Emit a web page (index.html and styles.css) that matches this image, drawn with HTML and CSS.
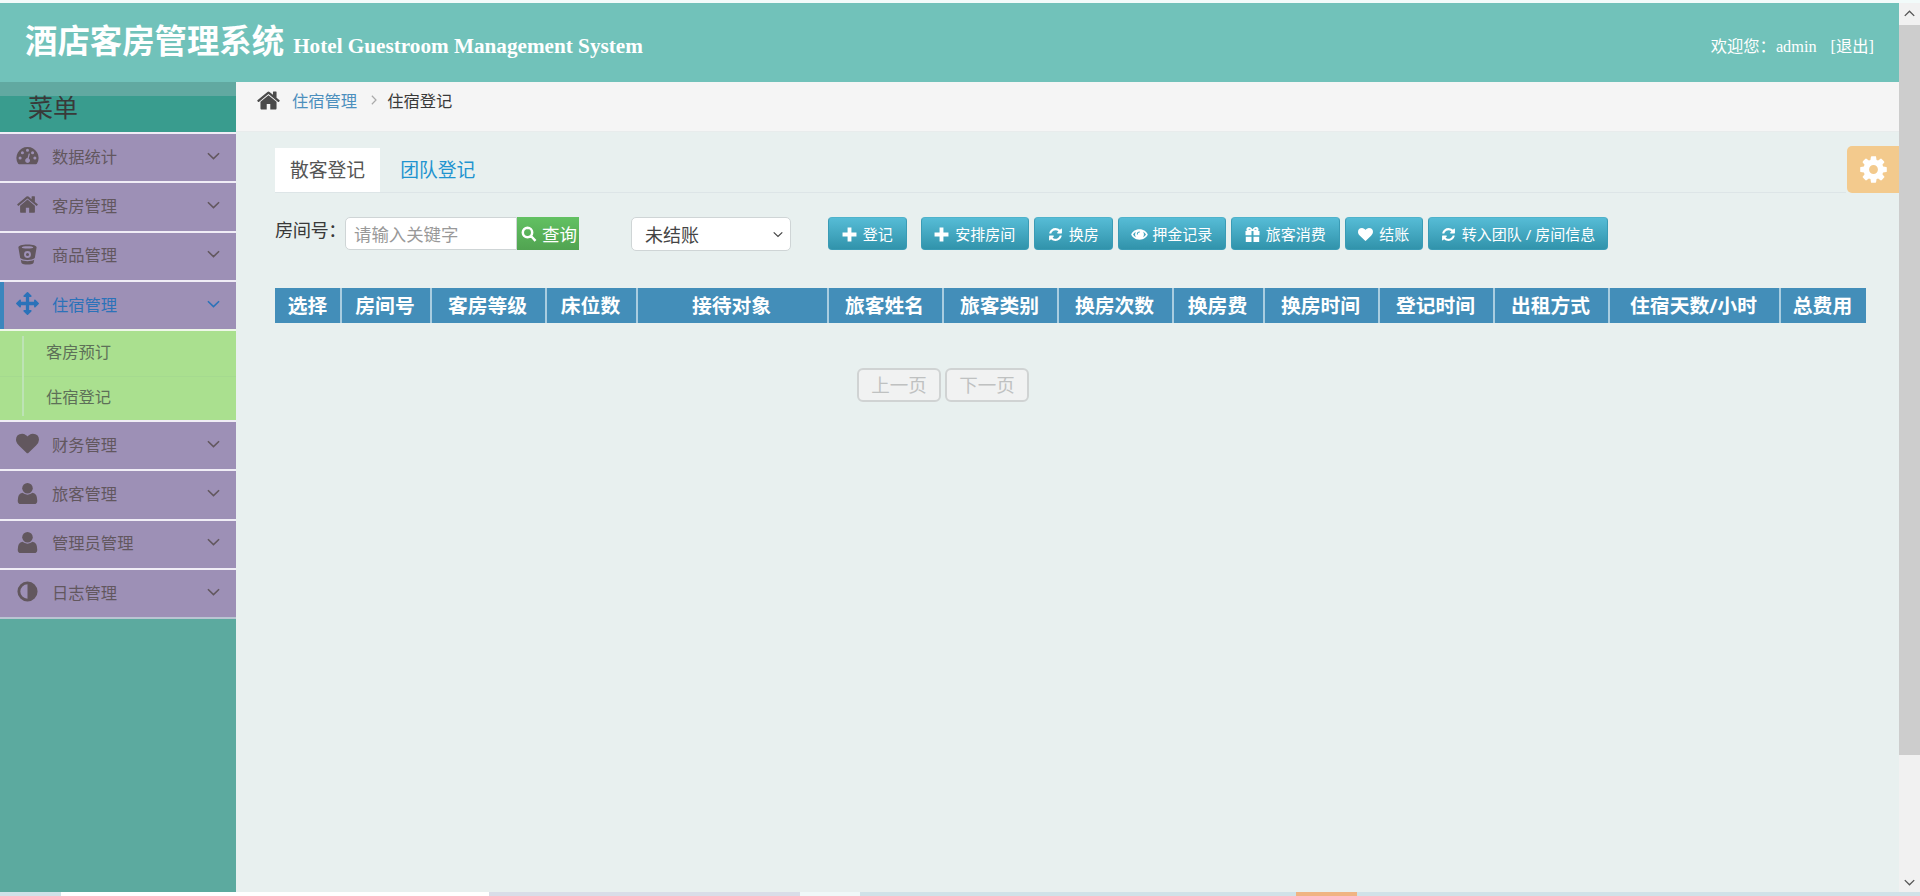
FILE: index.html
```
<!DOCTYPE html>
<html lang="zh-CN">
<head>
  <meta charset="UTF-8">
  <title>酒店客房管理系统</title>
  <link rel="stylesheet" href="styles.css">
</head>
<body>
<!-- icons -->
<svg class="sprite">
  <symbol id="home" viewBox="0 0 1792 1792"><path d="M1472 992v480q0 26-19 45t-45 19h-384v-384h-256v384h-384q-26 0-45-19t-19-45v-480q0-1 .5-3t.5-3l575-474 575 474q1 2 1 6zm223-69l-62 74q-8 9-21 11h-3q-13 0-21-7l-692-577-692 577q-12 8-24 7-13-2-21-11l-62-74q-8-10-7-23.500t11-21.500l719-599q32-26 76-26t76 26l244 204v-195q0-14 9-23t23-9h192q14 0 23 9t9 23v408l219 182q10 8 11 21.500t-7 23.500z"/></symbol>
  <symbol id="move" viewBox="0 0 1792 1792"><path d="M1792 896q0 26-19 45l-256 256q-19 19-45 19t-45-19-19-45v-128h-384v384h128q26 0 45 19t19 45-19 45l-256 256q-19 19-45 19t-45-19l-256-256q-19-19-19-45t19-45 45-19h128v-384h-384v128q0 26-19 45t-45 19-45-19l-256-256q-19-19-19-45t19-45l256-256q19-19 45-19t45 19 19 45v128h384v-384h-128q-26 0-45-19t-19-45 19-45l256-256q19-19 45-19t45 19l256 256q19 19 19 45t-19 45-45 19h-128v384h384v-128q0-26 19-45t45-19 45 19l256 256q19 19 19 45z"/></symbol>
  <symbol id="heart" viewBox="0 0 1792 1792"><path d="M896 1664q-26 0-44-18l-624-602q-10-8-27.500-26t-55.500-65.500-68-97.500-53.500-121-23.500-138q0-220 127-344t351-124q62 0 126.500 21.500t120 58 95.500 68.500 76 68q36-36 76-68t95.500-68.500 120-58 126.500-21.500q224 0 351 124t127 344q0 221-229 450l-623 600q-18 18-44 18z"/></symbol>
  <symbol id="refresh" viewBox="0 0 1792 1792"><path d="M1639 1056q0 5-1 7-64 268-268 434.500t-478 166.500q-146 0-282.500-55t-243.500-157l-129 129q-19 19-45 19t-45-19-19-45v-448q0-26 19-45t45-19h448q26 0 45 19t19 45-19 45l-137 137q71 66 161 102t187 36q134 0 250-65t186-179q11-17 53-117 8-23 30-23h192q13 0 22.500 9.500t9.500 22.500zm25-800v448q0 26-19 45t-45 19h-448q-26 0-45-19t-19-45 19-45l138-138q-148-137-349-137-134 0-250 65t-186 179q-11 17-53 117-8 23-30 23h-199q-13 0-22.500-9.500t-9.500-22.500v-7q65-268 270-434.500t480-166.500q146 0 284 55.500t245 156.500l130-129q19-19 45-19t45 19 19 45z"/></symbol>
  <symbol id="cog" viewBox="0 0 1792 1792"><path d="M1152 896q0-106-75-181t-181-75-181 75-75 181 75 181 181 75 181-75 75-181zm512-109v222q0 12-8 23t-20 13l-185 28q-19 54-39 91 35 50 107 138 10 12 10 25t-9 23q-27 37-99 108t-94 71q-12 0-26-9l-138-108q-44 23-91 38-16 136-29 186-7 28-36 28h-222q-14 0-24.500-8.500t-11.500-21.500l-28-184q-49-16-90-37l-141 107q-10 9-25 9-14 0-25-11-126-114-165-168-7-10-7-23 0-12 8-23 15-21 51-66.500t54-70.500q-27-50-41-99l-183-27q-13-2-21-12.500t-8-23.500v-222q0-12 8-23t19-13l186-28q14-46 39-92-40-57-107-138-10-12-10-24 0-10 9-23 26-36 98.500-107.500t94.500-71.500q13 0 26 10l138 107q44-23 91-38 16-136 29-186 7-28 36-28h222q14 0 24.500 8.500t11.500 21.500l28 184q49 16 90 37l142-107q9-9 24-9 13 0 25 10 129 119 165 170 7 8 7 22 0 12-8 23-15 21-51 66.500t-54 70.500q26 50 41 98l183 28q13 2 21 12.500t8 23.500z"/></symbol>
  <symbol id="dash" viewBox="0 0 24 24"><path fill-rule="evenodd" d="M12 3a11.500 11.500 0 0 0-9.800 17.500q.4.500 1 .5h17.600q.6 0 1-.5A11.500 11.500 0 0 0 12 3zM4.300 13a1.600 1.600 0 1 1 0 3.200 1.600 1.600 0 0 1 0-3.200zM6.700 7.500a1.600 1.600 0 1 1 0 3.200 1.600 1.600 0 0 1 0-3.200zM12 5a1.600 1.600 0 1 1 0 3.200A1.600 1.600 0 0 1 12 5zM17.300 7.500a1.600 1.600 0 1 1 0 3.200 1.600 1.600 0 0 1 0-3.200zM19.700 13a1.600 1.600 0 1 1 0 3.200 1.600 1.600 0 0 1 0-3.200zM13.300 9.800l1.200.3-1.200 4.900a2.500 2.500 0 1 1-1.300-.3z"/></symbol>
  <symbol id="bucket" viewBox="0 0 24 24"><path fill-rule="evenodd" d="M12 1.500c6 0 9.800 1.300 9.500 3.200l-1.900 11c-2.500 2.600-12.700 2.600-15.200 0l-1.900-11C2.200 2.800 6 1.500 12 1.500zm0 1.900c-3.500 0-6 .5-6 1.200s2.500 1.200 6 1.200 6-.5 6-1.200-2.500-1.200-6-1.200zm0 5a3.600 3.600 0 1 0 0 7.200 3.600 3.600 0 0 0 0-7.200zm0 2a1.600 1.600 0 1 1 0 3.200 1.600 1.600 0 0 1 0-3.200zM5 17.500c3.500 2 10.500 2 14 0l-.7 3.300c-1.500 2.300-11.100 2.300-12.600 0z"/></symbol>
  <symbol id="user" viewBox="0 0 24 24"><circle cx="12" cy="6.500" r="5.500"/><path d="M6.800 11.300Q1.800 12 1.800 19.500q0 3.500 3.300 3.500h13.800q3.300 0 3.300-3.500 0-7.500-5-8.200Q15 13.200 12 13.200t-5.200-1.900z"/></symbol>
  <symbol id="adjust" viewBox="0 0 24 24"><path fill-rule="evenodd" d="M12 1.500a10.500 10.500 0 1 0 0 21 10.500 10.500 0 0 0 0-21zm0 3v15a7.500 7.500 0 0 1 0-15z"/></symbol>
  <symbol id="plus" viewBox="0 0 14 14"><path d="M5.200.5h3.600v4.700h4.700v3.600H8.800v4.700H5.200V8.800H.5V5.200h4.700z"/></symbol>
  <symbol id="eye" viewBox="0 0 18 14"><path fill-rule="evenodd" d="M9 1.500C4.500 1.500 1.300 4.200.2 7c1.100 2.800 4.300 5.500 8.800 5.500s7.700-2.700 8.800-5.500C16.700 4.200 13.500 1.500 9 1.500zM2.200 7c.6-1.200 1.700-2.300 3-3-1.200 1.800-1.200 4.200 0 6-1.300-.7-2.400-1.800-3-3zm13.600 0c-.6 1.200-1.700 2.300-3 3 1.200-1.800 1.200-4.200 0-6 1.300.7 2.400 1.800 3 3zM9.300 3.800v1.100A1.800 1.800 0 0 0 7.300 7H6.200A3 3 0 0 1 9.300 3.800z"/></symbol>
  <symbol id="gift" viewBox="0 0 14 15"><path fill-rule="evenodd" d="M0 4h1.400C.2 2 1.500 0 3.500 0 5.300 0 6 1.200 7 2.600 8 1.200 8.700 0 10.500 0c2 0 3.300 2 2.100 4H14v4.300H8V4H6v4.300H0zm3-1.200h2.300C4.400 1.600 3 1.200 3 2.800zm8 0c0-1.600-1.400-1.200-2.300 0zM.3 9.700H6V15H.3zM8 9.700h5.700V15H8z"/></symbol>
  <symbol id="search" viewBox="0 0 16 16"><path fill="none" stroke="currentColor" stroke-width="2.500" d="M6.500 1.800a4.700 4.700 0 1 0 0 9.400 4.700 4.700 0 0 0 0-9.400zM10 10l4.500 4.800"/></symbol>
  <symbol id="down" viewBox="0 0 14 8"><path fill="none" stroke="currentColor" stroke-width="1.700" d="M1 1l6 5.800L13 1"/></symbol>
</svg>

<div class="page">
  <div class="view">
    <header class="header">
      <h1>酒店客房管理系统</h1>
      <span class="subtitle">Hotel Guestroom Management System</span>
      <div class="welcome"><span>欢迎您：</span><span class="name">admin</span><a href="#">[退出]</a></div>
    </header>
    <div class="body">
      <aside class="sidebar">
        <h2>菜单</h2>
        <ul class="menu">
          <li><a href="#"><svg><use href="#dash"/></svg>数据统计<svg class="arrow"><use href="#down"/></svg></a></li>
          <li><a href="#"><svg><use href="#home"/></svg>客房管理<svg class="arrow"><use href="#down"/></svg></a></li>
          <li><a href="#"><svg><use href="#bucket"/></svg>商品管理<svg class="arrow"><use href="#down"/></svg></a></li>
          <li>
            <a href="#" class="active"><svg><use href="#move"/></svg>住宿管理<svg class="arrow"><use href="#down"/></svg></a>
            <ul class="submenu">
              <li><a href="#">客房预订</a></li>
              <li><a href="#">住宿登记</a></li>
            </ul>
          </li>
          <li><a href="#"><svg><use href="#heart"/></svg>财务管理<svg class="arrow"><use href="#down"/></svg></a></li>
          <li><a href="#"><svg><use href="#user"/></svg>旅客管理<svg class="arrow"><use href="#down"/></svg></a></li>
          <li><a href="#"><svg><use href="#user"/></svg>管理员管理<svg class="arrow"><use href="#down"/></svg></a></li>
          <li><a href="#"><svg><use href="#adjust"/></svg>日志管理<svg class="arrow"><use href="#down"/></svg></a></li>
        </ul>
      </aside>
      <main class="main">
        <div class="breadcrumb">
          <svg class="home"><use href="#home"/></svg>
          <a href="#">住宿管理</a>
          <svg class="sep"><use href="#down"/></svg>
          <span>住宿登记</span>
        </div>
        <a href="#" class="settings"><svg><use href="#cog"/></svg></a>
        <div class="content">
          <div class="tabs">
            <a href="#" class="selected">散客登记</a>
            <a href="#">团队登记</a>
          </div>
          <div class="toolbar">
            <label for="room">房间号：</label>
            <input id="room" type="text" placeholder="请输入关键字">
            <button class="search"><svg><use href="#search"/></svg>查询</button>
            <div class="select">未结账<svg><use href="#down"/></svg></div>
            <div class="buttons">
              <button class="btn first"><svg><use href="#plus"/></svg>登记</button>
              <button class="btn wide"><svg><use href="#plus"/></svg>安排房间</button>
              <button class="btn"><svg><use href="#refresh"/></svg>换房</button>
              <button class="btn wide"><svg class="eye"><use href="#eye"/></svg>押金记录</button>
              <button class="btn wide"><svg><use href="#gift"/></svg>旅客消费</button>
              <button class="btn"><svg><use href="#heart"/></svg>结账</button>
              <button class="btn team"><svg><use href="#refresh"/></svg>转入团队 / 房间信息</button>
            </div>
          </div>
          <table class="list">
            <colgroup>
              <col class="w66"><col class="w90"><col class="w115"><col class="w91"><col class="w191">
              <col class="w115"><col class="w115"><col class="w115"><col class="w91"><col class="w115">
              <col class="w115"><col class="w115"><col class="w171"><col>
            </colgroup>
            <thead>
              <tr>
                <th>选择</th><th>房间号</th><th>客房等级</th><th>床位数</th><th>接待对象</th>
                <th>旅客姓名</th><th>旅客类别</th><th>换房次数</th><th>换房费</th><th>换房时间</th>
                <th>登记时间</th><th>出租方式</th><th>住宿天数/小时</th><th>总费用</th>
              </tr>
            </thead>
          </table>
          <div class="pager">
            <button disabled>上一页</button>
            <button disabled>下一页</button>
          </div>
        </div>
      </main>
    </div>
  </div>
  <div class="scrollbar">
    <svg class="up"><use href="#down"/></svg>
    <div class="thumb"></div>
    <svg><use href="#down"/></svg>
  </div>
</div>
<div class="taskbar"><i></i><i></i><i></i><i></i></div>
</body>
</html>
```
FILE: styles.css
```
* {
  box-sizing: border-box;
}
body {
  margin: 0;
  height: 896px;
  overflow: hidden;
  background: #e8f0ef;
  border-top: 3px solid #f2fbfa;
  font-family: "Open Sans", "Noto Sans CJK SC", sans-serif;
  font-size: 16.3px;
  color: #393939;
}
a {
  text-decoration: none;
  color: inherit;
}
ul {
  margin: 0;
  padding: 0;
  list-style: none;
}
svg {
  fill: currentColor;
  flex: none;
}
button {
  font-family: inherit;
}
.sprite {
  display: none;
}
.page {
  display: flex;
  height: 889px;
}
.view {
  flex: 1;
  display: flex;
  flex-direction: column;
}

/* header */
.header {
  display: flex;
  align-items: center;
  height: 79px;
  padding: 0 25px;
  background: #71c2ba;
  color: #fff;
  font-family: "Liberation Serif", "Noto Sans CJK SC", serif;
}
.header h1 {
  margin: 0 9px 1px 0;
  font-size: 32.4px;
  line-height: 40px;
}
.subtitle {
  padding-top: 7px;
  font-size: 21.2px;
  font-weight: bold;
}
.welcome {
  display: flex;
  align-items: baseline;
  margin-left: auto;
  padding-top: 5px;
}
.welcome .name {
  margin-right: 14px;
}

/* sidebar */
.body {
  flex: 1;
  display: flex;
}
.sidebar {
  width: 236px;
  background: #5caa9f;
  border-top: 14px solid #61a9a1;
}
.sidebar h2 {
  margin: 0;
  height: 36px;
  padding-left: 28px;
  background: #399c8e;
  font-size: 25px;
  font-weight: normal;
  line-height: 23px;
}
.menu {
  border-bottom: 2px solid #b9c5d2;
}
.menu > li > a {
  display: flex;
  align-items: center;
  height: 49.3px;
  padding: 0 16px 4px;
  border-top: 2px solid #f0edf6;
  background: #9d90b6;
  color: #62575e;
}
.menu > li > a svg {
  width: 23px;
  height: 23px;
  margin-right: 13px;
}
.menu > li > a .arrow {
  width: 13px;
  height: 8px;
  margin: 0 0 0 auto;
}
.menu > li > a.active {
  color: #2b72b9;
  box-shadow: inset 4px 0 #3b86bd;
}
.submenu {
  position: relative;
  height: 91px;
  border-top: 2px solid #eef8e8;
  background: #aae08f;
  color: #5d7058;
}
.submenu:before {
  content: "";
  position: absolute;
  left: 22px;
  top: 5px;
  width: 2px;
  height: 80px;
  background: #bde3b5;
}
.submenu li {
  height: 45px;
  padding-left: 46px;
  line-height: 42px;
}
.submenu li + li {
  border-top: 1px solid #a5da8f;
  line-height: 40px;
}

/* main */
.main {
  position: relative;
  flex: 1;
}
.breadcrumb {
  display: flex;
  align-items: center;
  height: 50px;
  padding: 0 20px 13px;
  background: #f5f5f5;
  border-bottom: 1px solid #e8ecec;
}
.breadcrumb a {
  color: #4c8fbd;
}
.breadcrumb .home {
  width: 25px;
  height: 25px;
  margin-right: 11px;
  color: #4a4a4a;
}
.breadcrumb .sep {
  width: 10px;
  height: 6px;
  margin: 0 8px 0 12px;
  color: #aaa;
  transform: rotate(-90deg);
}
.settings {
  position: absolute;
  right: 0;
  top: 64px;
  display: flex;
  align-items: center;
  justify-content: center;
  width: 52px;
  height: 47px;
  background: #f3ca8d;
  border-radius: 5px 0 0 5px;
  color: #fff;
}
.settings svg {
  width: 31px;
  height: 31px;
}
.content {
  padding: 16px 33px 0 39px;
}
.tabs {
  display: flex;
  height: 45px;
  margin-right: 20px;
  border-bottom: 1px solid #dde5e7;
  font-size: 18.800px;
  line-height: 44px;
}
.tabs a {
  padding: 0 15px;
  color: #1f94cf;
}
.tabs a + a {
  margin-left: 5px;
}
.tabs .selected {
  background: #fff;
  color: #555;
}
.toolbar {
  display: flex;
  height: 34px;
  margin-top: 24px;
}
.toolbar label {
  width: 70px;
  font-size: 18.300px;
  letter-spacing: -.5px;
  line-height: 26px;
  white-space: nowrap;
}
.toolbar input {
  width: 172px;
  height: 33px;
  padding: 0 8px;
  border: 1px solid #cfd5d6;
  border-radius: 5px 0 0 5px;
  background: #fff;
  font-family: inherit;
  font-size: 17.400px;
}
.toolbar input::placeholder {
  color: #999;
}
.search {
  display: flex;
  align-items: center;
  width: 62px;
  height: 33px;
  padding: 0 0 0 4px;
  border: 0;
  background: linear-gradient(#62c162, #51a351);
  color: #fff;
  font-size: 17.500px;
}
.search svg {
  width: 16px;
  height: 16px;
  margin-right: 5px;
}
.select {
  display: flex;
  align-items: center;
  justify-content: space-between;
  width: 160px;
  margin-left: 52px;
  padding: 0 7px 0 13px;
  border: 1px solid #cfd5d6;
  border-radius: 5px;
  background: #fff;
  font-size: 18px;
  color: #444;
}
.select svg {
  width: 10px;
  height: 7px;
}
.buttons {
  display: flex;
  gap: 5px;
  margin-left: 37px;
}
.btn {
  display: flex;
  align-items: center;
  justify-content: center;
  width: 78.500px;
  height: 33px;
  padding: 0 0 1px;
  border: 1px solid #3a9bb5;
  border-top-color: #4fb3cb;
  border-radius: 4px;
  background: linear-gradient(#56bcd6, #3193ab);
  color: #fff;
  font-size: 15px;
  white-space: nowrap;
}
.btn svg {
  width: 15px;
  height: 15px;
  margin: 3px 6px 0 0;
}
.btn .eye {
  width: 17px;
  margin-right: 4px;
}
.btn.first {
  margin-right: 9px;
}
.btn.wide {
  width: 108.500px;
}
.btn.team {
  width: 180px;
}

/* table */
.list {
  width: 1591px;
  margin-top: 37px;
  table-layout: fixed;
  border-collapse: collapse;
  background: #438eb9;
  color: #fff;
  font-size: 19.800px;
}
.list th {
  height: 35px;
  padding: 0 2px 0 0;
  border-left: 2px solid #a9cde0;
  line-height: 33px;
  white-space: nowrap;
}
.list th:first-child {
  padding: 0;
  border-left: 0;
}
.w66 { width: 66px; }
.w90 { width: 90px; }
.w91 { width: 91px; }
.w115 { width: 115px; }
.w171 { width: 171px; }
.w191 { width: 191px; }
.pager {
  display: flex;
  gap: 4px;
  margin: 45px 0 0 582px;
}
.pager button {
  width: 84px;
  height: 34px;
  padding: 0;
  border: 2px solid #d0d3d3;
  border-radius: 6px;
  background: #f1f2f2;
  color: #bfc1c1;
  font-size: 18.500px;
  line-height: 28px;
}

/* window edges */
.scrollbar {
  display: flex;
  flex-direction: column;
  align-items: center;
  width: 21px;
  padding: 7px 0 6px;
  background: #f1f1f1;
  color: #555;
}
.scrollbar svg {
  width: 11px;
  height: 7px;
  stroke-width: 2px;
}
.scrollbar .up {
  transform: rotate(180deg);
}
.thumb {
  width: 21px;
  height: 730px;
  margin: 8px 0 auto;
  background: #cdcdcd;
}
.taskbar {
  display: flex;
  height: 4px;
  padding-left: 61px;
  background: #d0e2e8;
}
.taskbar i {
  width: 428px;
  background: #fff;
}
.taskbar i:nth-child(2) {
  width: 311px;
  background: #d9dde8;
}
.taskbar i:nth-child(3) {
  width: 60px;
  background: #f0f8f8;
}
.taskbar i:nth-child(4) {
  width: 61px;
  margin-left: 436px;
  background: #f0b483;
}
```
